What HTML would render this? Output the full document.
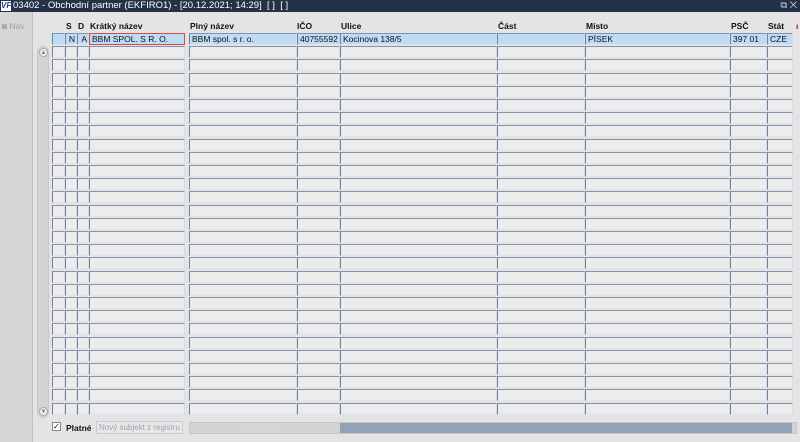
<!DOCTYPE html>
<html><head><meta charset="utf-8"><style>
*{margin:0;padding:0;box-sizing:border-box}
body{width:800px;height:442px;overflow:hidden;background:#e4e4e4;font-family:"Liberation Sans",sans-serif;font-size:8px;position:relative;color:#111}
.title{position:absolute;left:0;top:0;width:800px;height:12px;background:#243247;color:#fff;font-size:9.5px;line-height:12px;padding-left:13px}
.logo{position:absolute;left:1px;top:1px;width:10px;height:10px;background:#fff;color:#1d3a9a;font-weight:bold;font-style:italic;font-size:8px;line-height:10px;text-align:center}
.left{position:absolute;left:0;top:12px;width:33px;height:430px;background:#d6d6d6;border-right:1px solid #b9c1cc}
.nav{position:absolute;left:2px;top:9px;color:#9ea4ae;font-size:8.5px}
.h{position:absolute;top:21px;font-weight:bold;font-size:8.5px}
.cell{position:absolute;height:12px;background:#ececec;border-left:1px solid #6f82a2;border-top:1px solid #8393ad;border-bottom:1px solid #dfe3e8;border-right:1px solid #d8dce2;font-size:8.5px;line-height:10px;padding-left:2px;white-space:nowrap;overflow:hidden}
.sel{background:#bfdcf6}
.vs{position:absolute;left:37px;top:46px;width:12px;height:372px;background:#d4d4d4;border-radius:6px;border:1px solid #c8c8c8}
.ar{position:absolute;left:1px;width:9px;height:9px;border-radius:50%;background:#eee;border:1px solid #a0a8b2;font-size:6px;line-height:8px;text-align:center;color:#778}
</style></head><body>
<div class="title"><div class="logo">VF</div>03402 - Obchodní partner (EKFIRO1) - [20.12.2021; 14:29]&nbsp; [ ]&nbsp; [ ]<span style="position:absolute;right:3px;top:0;color:#ccd">⧉ ✕</span></div>
<div class="left"><div class="nav">◙ Nav</div></div>
<div class="h" style="left:66px">S</div><div class="h" style="left:78px">D</div><div class="h" style="left:90px">Krátký název</div><div class="h" style="left:190px">Plný název</div><div class="h" style="left:297px">IČO</div><div class="h" style="left:341px">Ulice</div><div class="h" style="left:498px">Část</div><div class="h" style="left:586px">Místo</div><div class="h" style="left:731px">PSČ</div><div class="h" style="left:768px">Stát</div><div class="h" style="left:796px;color:#b06">ı</div>
<div class="vs"><div class="ar" style="top:1px">▲</div><div class="ar" style="bottom:1px">▼</div></div>
<div id="g"></div>
<div style="position:absolute;left:52px;top:422px;width:9px;height:9px;background:#fff;border:1px solid #888;font-size:8px;line-height:7px">✓</div>
<div style="position:absolute;left:66px;top:423px;font-weight:bold;font-size:8.5px">Platné</div>
<div style="position:absolute;left:96px;top:421px;width:87px;height:13px;border:1px solid #c5cbd3;background:#e8e8e8;color:#9aa3b0;font-size:8px;line-height:11px;text-align:center">Nový subjekt z registru</div>
<div style="position:absolute;left:189px;top:422px;width:608px;height:12px;background:#d4d4d4;border:1px solid #c4c8ce"></div>
<div style="position:absolute;left:340px;top:423px;width:452px;height:10px;background:#93a3b7"></div>
<div style="position:absolute;left:245px;top:425px;color:#fff;font-size:6px;letter-spacing:1px">:::::::::::</div>
<script>
var cols=[[52,13],[65,12],[77,12],[89,96],[189,108],[297,43],[340,157],[497,88],[585,145],[730,37],[767,26]];
var row0=["","N","A","BBM SPOL. S R. O.","BBM spol. s r. o.","40755592","Kocinova 138/5","","PÍSEK","397 01","CZE"];
var h="";
for(var r=0;r<29;r++){var y=33+r*13.2;
for(var c=0;c<cols.length;c++){var t=r==0?row0[c]:"";var cl="cell"+(r==0?" sel":"");var st="left:"+cols[c][0]+"px;top:"+y+"px;width:"+cols[c][1]+"px;";
if(r==0&&c==3)st+="border:1px solid #e04848;";
if(r==0&&(c==1||c==2))st+="text-align:right;padding-right:1px;";
h+='<div class="'+cl+'" style="'+st+'">'+t+'</div>';}}
document.getElementById("g").innerHTML=h;
</script>
</body></html>
